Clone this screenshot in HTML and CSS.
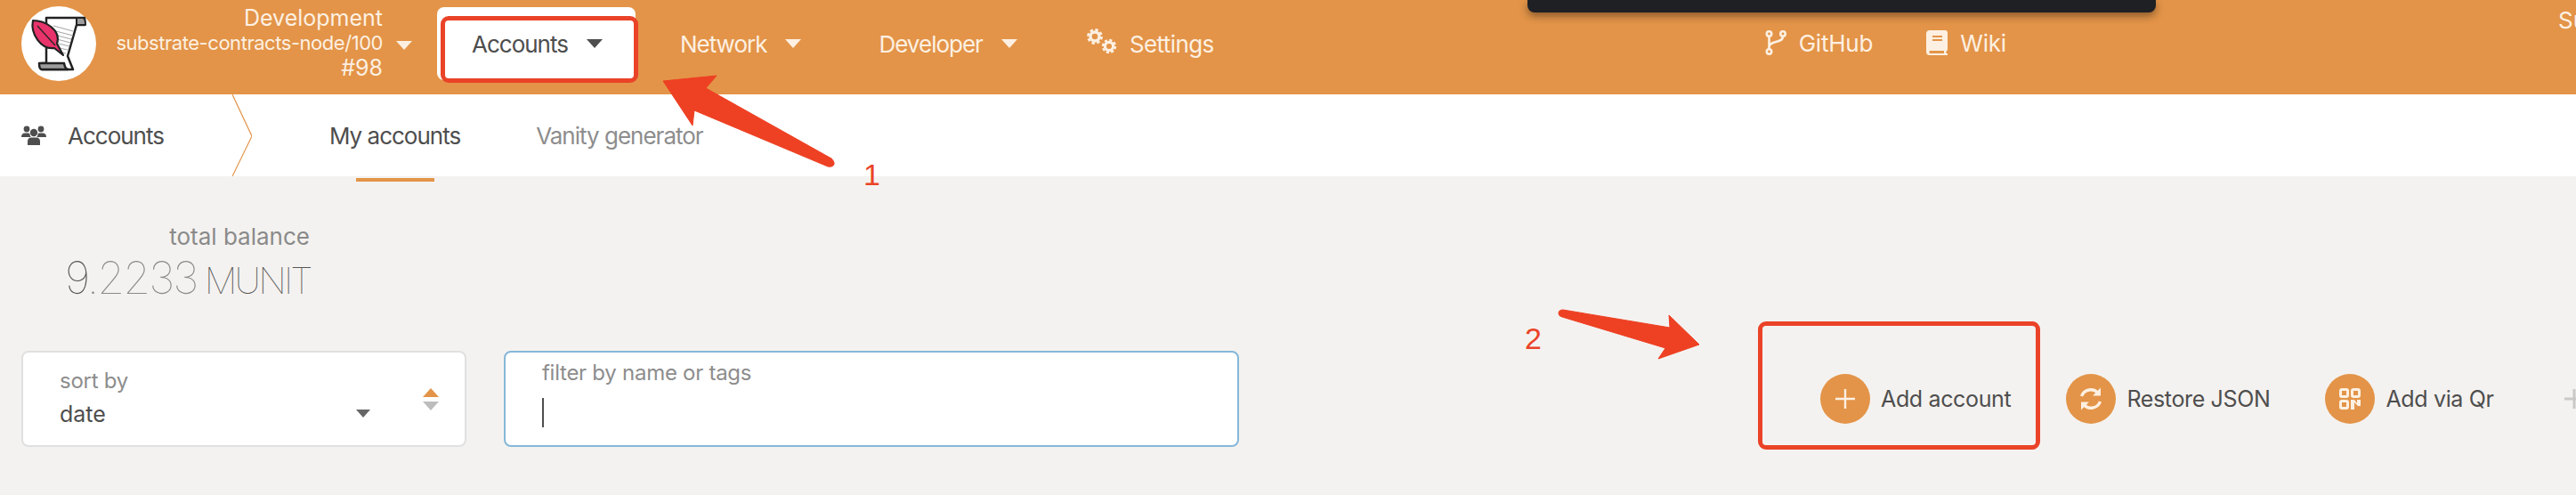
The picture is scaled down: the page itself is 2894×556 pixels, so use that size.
FILE: index.html
```html
<!DOCTYPE html>
<html lang="en">
<head>
  <meta charset="UTF-8" />
  <meta name="viewport" content="width=device-width, initial-scale=1.0" />
  <title>Accounts</title>
  <link rel="stylesheet" href="styles.css">
</head>
<body>
  <header class="topbar">
    <svg class="logo" viewBox="0 0 84 84">
      <circle cx="42" cy="42" r="42" fill="#fff" />
      <path d="M28 13H71V21H62L52 56L58 71H23V64H28Z" fill="#fff" stroke="#222" stroke-width="2.5" stroke-linejoin="round" />
      <path d="M62 13H69Q72 13 72 21H62Z" fill="#9d9d9d" stroke="#222" stroke-width="2" stroke-linejoin="round" />
      <path d="M20 64H48Q49 70 52 71H23Q20 71 20 64Z" fill="#9d9d9d" stroke="#222" stroke-width="2.5" stroke-linejoin="round" />
      <path d="M36 22L58 28M35 27L58 33M37 32L56 37M40 37L55 41M42 42L54 45M43 47L52 49M46 52L50 53" stroke="#a9a9a9" stroke-width="1.2" />
      <path d="M13 16C26 16 45 26 40 42L47 55L37 47C22 49 10 31 13 16Z" fill="#e8336b" stroke="#222" stroke-width="2.2" stroke-linejoin="round" />
      <path d="M18 22L38 44" stroke="#222" stroke-width="1.2" />
    </svg>
    <div class="chain">
      <div class="chain-name">Development</div>
      <div class="chain-version">substrate-contracts-node/100</div>
      <div class="chain-name">#98</div>
    </div>
    <span class="caret caret-chain"></span>

    <nav class="menu">
      <a class="menu-item menu-item-active">Accounts <span class="caret"></span></a>
      <a class="menu-item">Network <span class="caret"></span></a>
      <a class="menu-item">Developer <span class="caret"></span></a>
      <a class="menu-item menu-item-settings">
        <svg class="menu-icon-cogs" viewBox="0 0 36 30">
          <g fill="none" stroke="currentColor">
            <circle cx="10" cy="10" r="5" stroke-width="3.4" />
            <circle cx="10" cy="10" r="7.6" stroke-width="2.6" stroke-dasharray="3.4 2.6" />
            <circle cx="26" cy="21" r="4.6" stroke-width="3.2" />
            <circle cx="26" cy="21" r="7" stroke-width="2.4" stroke-dasharray="3.2 2.3" />
          </g>
        </svg>
        Settings
      </a>
    </nav>

    <div class="links">
      <a class="link">
        <svg class="link-icon" viewBox="0 0 24 28" fill="none" stroke="currentColor" stroke-width="2.6">
          <circle cx="4.5" cy="4" r="2.7" />
          <circle cx="4.5" cy="24" r="2.7" />
          <circle cx="20" cy="4" r="2.7" />
          <path d="M4.5 7V21M20 7C20 15 4.5 11 4.5 19" />
        </svg>
        GitHub
      </a>
      <a class="link">
        <svg class="link-icon" viewBox="0 0 24 28">
          <path fill="currentColor" d="M4 0H21Q24 0 24 3V21Q24 23 22.500 23.500V26H24V28H4Q0 28 0 24V4Q0 0 4 0Z" />
          <path fill="#e39448" d="M7 6H18V8H7ZM7 10H18V12H7ZM4 23H20V26H4Q2.500 24.500 4 23Z" />
        </svg>
        Wiki
      </a>
    </div>
    <div class="node-name">Su</div>
    <div class="dark-popup"></div>
  </header>

  <div class="subnav">
    <div class="subnav-title">
      <svg class="subnav-icon" viewBox="0 0 28 22" fill="#4e4e4e">
        <circle cx="6" cy="4" r="3.4" />
        <circle cx="22" cy="4" r="3.4" />
        <circle cx="14" cy="8" r="4.2" />
        <path d="M0 13Q0 8.500 4 8.500H8Q9 8.500 9.500 9.500Q9.500 12 11 13H0ZM28 13Q28 8.500 24 8.500H20Q19 8.500 18.500 9.500Q18.500 12 17 13ZM7 22V18Q7 13.500 11 13.500H17Q21 13.500 21 18V22Z" />
      </svg>
      Accounts
    </div>
    <svg class="subnav-chevron" viewBox="0 0 22 92" fill="none" stroke="#e39448" stroke-width="1.2">
      <path d="M0 0L22 47L0 92" />
    </svg>
    <a class="subnav-tab subnav-tab-active">My accounts</a>
    <a class="subnav-tab">Vanity generator</a>
  </div>

  <main class="content">
    <div class="balance">
      <div class="balance-label">total balance</div>
      <div class="balance-value"><span class="balance-int">9</span>.2233<span class="balance-unit"> MUNIT</span></div>
    </div>

    <div class="toolbar">
      <div class="field field-sort">
        <div class="sort-select">
          <div class="field-label">sort by</div>
          <div class="sort-value">date <span class="caret caret-small"></span></div>
        </div>
        <div class="sort-order">
          <span class="order-up"></span>
          <span class="order-down"></span>
        </div>
      </div>
      <div class="field field-filter">
        <div class="field-label">filter by name or tags</div>
        <div class="text-cursor"></div>
      </div>

      <div class="actions">
        <a class="action">
          <span class="action-circle">
            <svg viewBox="0 0 24 24" fill="none" stroke="#fdf0e2" stroke-width="2.400"><path d="M12 1V23M1 12H23" /></svg>
          </span>
          Add account
        </a>
        <a class="action">
          <span class="action-circle">
            <svg class="icon-sync" viewBox="0 0 28 28" fill="none" stroke="#fdf0e2" stroke-width="3.400">
              <path d="M3.500 11A11 11 0 0 1 22 7.500" />
              <path d="M24.500 17A11 11 0 0 1 6 20.500" />
              <path d="M25 1.500V10.500H16ZM3 26.500V17.500H12Z" fill="#fdf0e2" stroke="none" />
            </svg>
          </span>
          Restore JSON
        </a>
        <a class="action">
          <span class="action-circle">
            <svg viewBox="0 0 24 24" fill="none" stroke="#fdf0e2" stroke-width="3">
              <rect x="1.500" y="1.500" width="8" height="8" rx="1.500" />
              <rect x="14.500" y="1.500" width="8" height="8" rx="1.500" />
              <rect x="1.500" y="14.500" width="8" height="8" rx="1.500" />
              <path d="M13 13H17L20 17V13H24V20H21L17 16V24H13Z" fill="#fdf0e2" stroke="none" />
            </svg>
          </span>
          Add via Qr
        </a>
        <a class="action">
          <span class="action-circle action-circle-plain">
            <svg viewBox="0 0 24 24" fill="none" stroke="#c9c9c9" stroke-width="3"><path d="M12 1V23M1 12H23" /></svg>
          </span>
        </a>
      </div>
    </div>
  </main>

  <!-- red notes drawn over the screenshot -->
  <div class="note-frame note-frame-accounts"></div>
  <div class="note-frame note-frame-add"></div>
  <span class="note-number note-number-1">1</span>
  <span class="note-number note-number-2">2</span>
  <svg class="note-arrows" viewBox="0 0 2894 556">
    <path fill="#ee4023" stroke="#ee4023" stroke-width="1" d="M745 91L805 85L793 99L934 178Q939 183 936 186Q934 188 930 187L780 124L778 141Z" />
    <path fill="#ee4023" stroke="#ee4023" stroke-width="1" d="M1909 387L1875 354L1876 368L1756 348Q1751 348 1751 352Q1751 355 1755 356L1871 391L1863 403Z" />
  </svg>
</body>
</html>
```

FILE: styles.css
```css
html, body {
  margin: 0;
  width: 2894px;
  height: 556px;
  overflow: hidden;
}

body {
  position: relative;
  font-family: 'Inter', 'Liberation Sans', sans-serif;
  font-size: 26px;
  color: #4e4e4e;
  background: #f4f2f0;
}

.topbar {
  display: flex;
  align-items: flex-start;
  height: 106px;
  padding-left: 24px;
  color: #fdf0e2;
  background: #e39448;
}

.logo {
  flex: none;
  width: 84px;
  height: 84px;
  margin-top: 7px;
}

.chain {
  flex: none;
  width: 322px;
  padding-top: 6px;
  text-align: right;
  line-height: 28px;
  font-size: 25px;
}

.chain-version {
  font-size: 22px;
  letter-spacing: -0.46px;
}

.caret {
  display: inline-block;
  width: 0;
  height: 0;
  margin-left: 15px;
  border-left: 9px solid transparent;
  border-right: 9px solid transparent;
  border-top: 10px solid currentColor;
  vertical-align: 3px;
}

.caret-chain {
  flex: none;
  margin: 46px 0 0 15px;
}

.menu {
  display: flex;
  flex: none;
  gap: 11px;
  margin-left: 28px;
  letter-spacing: -1px;
}

.menu-item {
  display: flex;
  align-items: center;
  height: 82px;
  margin-top: 8px;
  padding: 0 37px 0 39px;
  border-radius: 8px;
}

.menu-item .caret {
  margin-left: 21px;
}

.menu-item-active {
  color: #4e4e4e;
  background: #fff;
}

.menu-item-settings {
  margin-left: 29px;
  padding: 0;
  letter-spacing: -0.6px;
}

.menu-icon-cogs {
  width: 36px;
  height: 30px;
  margin-right: 13px;
  margin-top: -6px;
}

.links {
  display: flex;
  flex: none;
  gap: 60px;
  margin-left: 619px;
  padding-top: 34px;
  letter-spacing: -0.2px;
}

.link {
  display: flex;
  align-items: center;
  gap: 14px;
  height: 28px;
}

.link-icon {
  width: 24px;
  height: 28px;
}

.node-name {
  flex: none;
  margin-left: 620px;
  padding-top: 8px;
  line-height: 30px;
}

.dark-popup {
  position: absolute;
  top: 0;
  left: 1716px;
  width: 706px;
  height: 14px;
  border-radius: 0 0 8px 8px;
  background: #1f2024;
  box-shadow: 0 4px 10px rgba(0, 0, 0, 0.4);
}

.subnav {
  display: flex;
  align-items: center;
  height: 92px;
  letter-spacing: -1px;
  background: #fff;
}

.subnav-title {
  display: flex;
  align-items: center;
  flex: none;
  width: 237px;
  padding-left: 24px;
}

.subnav-icon {
  width: 28px;
  height: 22px;
  margin-right: 24px;
}

.subnav-chevron {
  flex: none;
  width: 22px;
  height: 92px;
}

.subnav-tab {
  position: relative;
  margin-left: 85px;
  color: #8d8d8d;
}

.subnav-tab-active {
  margin-left: 87px;
  color: #4e4e4e;
}

.subnav-tab-active::after {
  content: "";
  position: absolute;
  left: 30px;
  right: 29px;
  top: 63px;
  height: 4px;
  background: #e39448;
}

.content {
  padding: 0 0 0 24px;
}

.balance {
  width: 275px;
  margin-left: 49px;
  padding-top: 50px;
  text-align: right;
}

.balance-label {
  margin-bottom: -2px;
  line-height: 36px;
  color: #8a8a8a;
}

.balance-value {
  line-height: 60px;
  font-size: 50px;
  font-weight: 100;
  letter-spacing: -2.1px;
  color: #8a8a8a;
  white-space: nowrap;
}

.balance-int {
  color: #555;
}

.balance-unit {
  font-size: 41px;
  letter-spacing: -2.9px;
  color: #555;
}

.toolbar {
  display: flex;
  margin-top: 49px;
}

.field {
  box-sizing: border-box;
  flex: none;
  height: 108px;
  border: 2px solid #e0e0e0;
  border-radius: 8px;
  background: #fff;
}

.field-sort {
  display: flex;
  align-items: center;
  width: 500px;
  padding-left: 41px;
}

.field-filter {
  width: 826px;
  margin-left: 42px;
  padding: 6px 0 0 41px;
  border-color: #85b7d9;
}

.field-label {
  line-height: 34px;
  font-size: 24px;
  letter-spacing: -0.27px;
  color: #8d8d8d;
}

.sort-select {
  width: 349px;
  padding-bottom: 4px;
}

.sort-value {
  display: flex;
  align-items: center;
  justify-content: space-between;
  margin-top: 3px;
  line-height: 34px;
  color: #4e4e4e;
  font-size: 25px;
}

.caret-small {
  border-left-width: 8px;
  border-right-width: 8px;
  border-top-width: 9px;
  color: #666;
}

.sort-order {
  display: flex;
  flex-direction: column;
  gap: 5px;
  margin-left: 59px;
}

.order-up, .order-down {
  width: 0;
  height: 0;
  border-left: 9px solid transparent;
  border-right: 9px solid transparent;
}

.order-up {
  border-bottom: 10px solid #e39448;
}

.order-down {
  border-top: 10px solid #bdbdbd;
}

.text-cursor {
  width: 2px;
  height: 33px;
  margin-top: 11px;
  background: #4e4e4e;
}

.actions {
  display: flex;
  flex: none;
  align-items: center;
  gap: 62px;
  margin-left: 653px;
  font-size: 25px;
  letter-spacing: -0.35px;
}

.action {
  display: flex;
  align-items: center;
  gap: 12px;
  white-space: nowrap;
}

.action-circle {
  display: flex;
  align-items: center;
  justify-content: center;
  flex: none;
  width: 56px;
  height: 56px;
  border-radius: 50%;
  background: #e39448;
}

.action-circle svg {
  width: 24px;
  height: 24px;
}

.action-circle .icon-sync {
  width: 28px;
  height: 28px;
}

.action-circle-plain {
  background: none;
}

.note-frame {
  position: absolute;
  box-sizing: border-box;
  border: 5px solid #ea4328;
  border-radius: 9px;
}

.note-frame-accounts {
  left: 495px;
  top: 18px;
  width: 222px;
  height: 75px;
}

.note-frame-add {
  left: 1975px;
  top: 361px;
  width: 317px;
  height: 144px;
}

.note-number {
  position: absolute;
  line-height: 34px;
  font-family: 'Liberation Sans', sans-serif;
  font-size: 34px;
  color: #ea4328;
}

.note-number-1 {
  left: 970px;
  top: 179px;
}

.note-number-2 {
  left: 1713px;
  top: 363px;
}

.note-arrows {
  position: absolute;
  left: 0;
  top: 0;
  width: 2894px;
  height: 556px;
  pointer-events: none;
}
```
